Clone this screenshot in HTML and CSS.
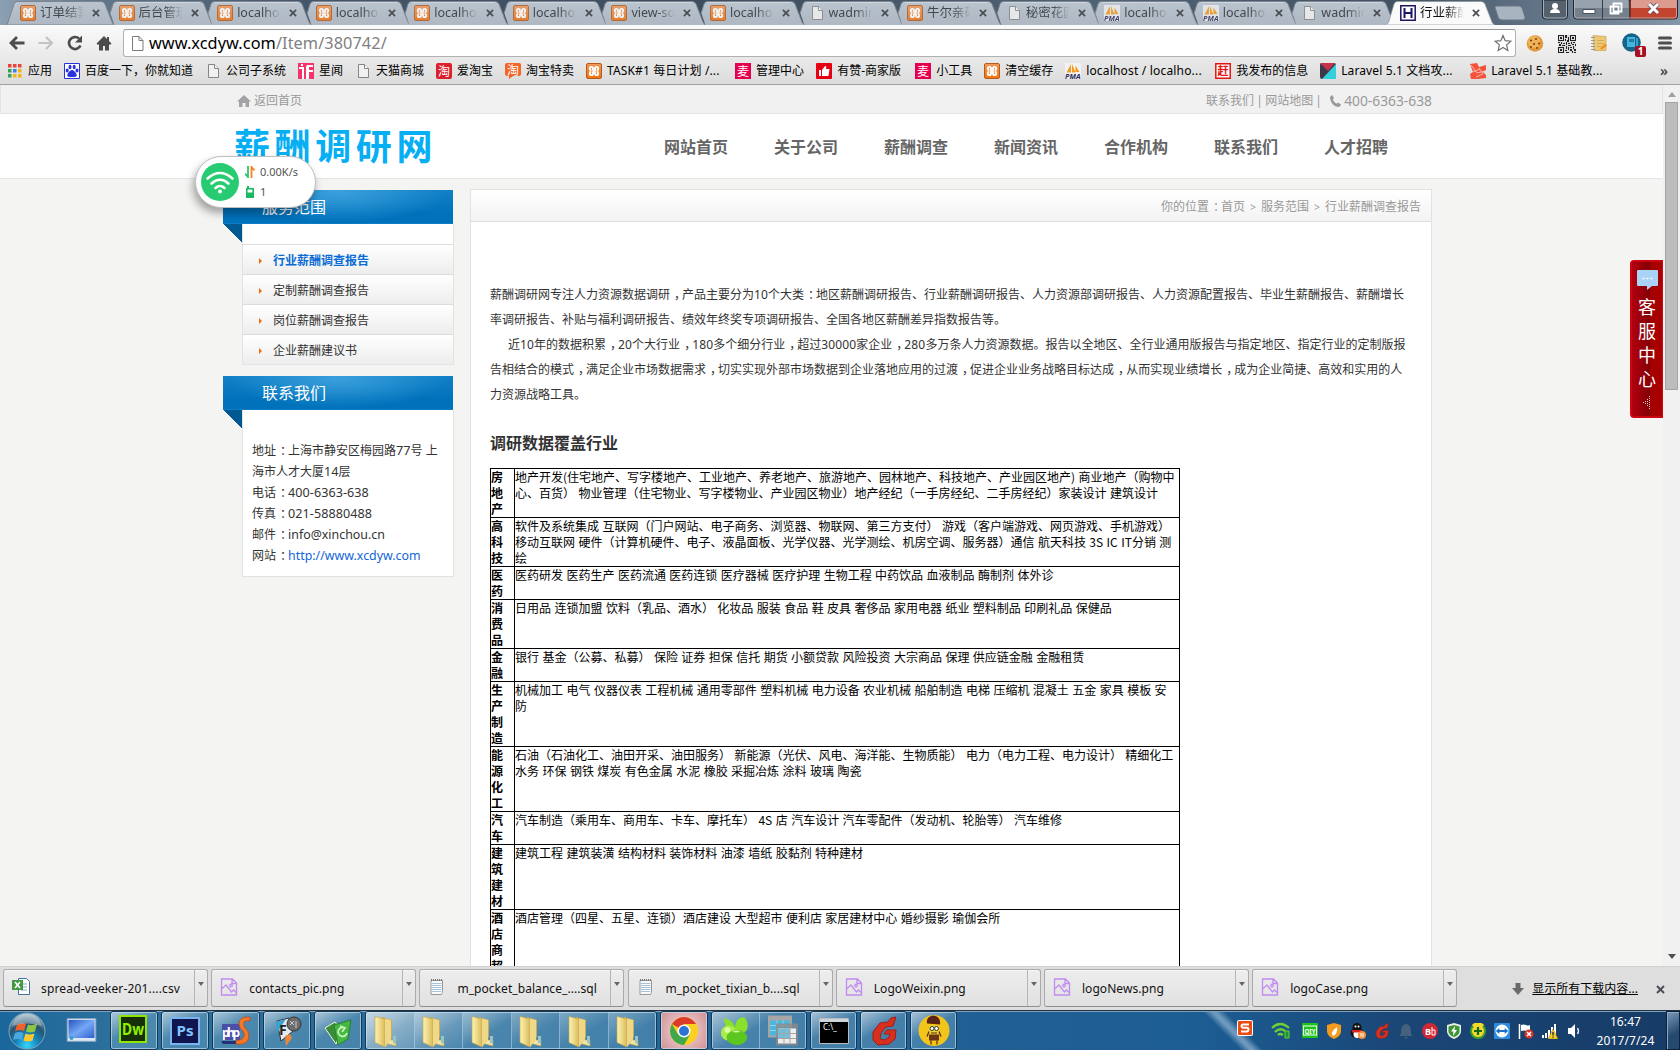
FILE: index.html
```html
<!DOCTYPE html>
<html lang="zh-CN">
<head>
<meta charset="utf-8">
<title>行业薪酬调查报告</title>
<link rel="stylesheet" href="styles.css">
</head>
<body>
<svg class="defs" width="0" height="0">
  <defs>
    <linearGradient id="gOrange" x1="0" y1="0" x2="0" y2="1"><stop offset="0" stop-color="#f09a5c"/><stop offset="1" stop-color="#f2710d"/></linearGradient>
    <linearGradient id="gFolder" x1="0" y1="0" x2="1" y2="0"><stop offset="0" stop-color="#fbf3b4"/><stop offset=".5" stop-color="#ecd985"/><stop offset="1" stop-color="#d9b95a"/></linearGradient>
    <radialGradient id="gOrb" cx=".5" cy=".9" r=".9"><stop offset="0" stop-color="#35d6fb"/><stop offset=".35" stop-color="#1384bb"/><stop offset=".65" stop-color="#27536f"/><stop offset="1" stop-color="#a9c3d0"/></radialGradient>
    <linearGradient id="gScreen" x1="0" y1="0" x2="1" y2="1"><stop offset="0" stop-color="#2456c4"/><stop offset=".5" stop-color="#74a7f3"/><stop offset="1" stop-color="#2f62cf"/></linearGradient>
    <linearGradient id="gTab" x1="0" y1="0" x2="0" y2="1"><stop offset="0" stop-color="#b9c4cf"/><stop offset="1" stop-color="#aeb7c2"/></linearGradient>
    <symbol id="tab" viewBox="0 0 108 25"><path d="M8.4 25 4.2 13 7 4Q8 1.500 10 1.500H94Q97 1.500 98 4L105 22Q106 24.500 107.500 25Z" fill="url(#gTab)"/><path d="M4.200 13 7 4Q8 1.500 10 1.500H94Q97 1.500 98 4L105 22Q106 24.500 108 24.500" fill="none" stroke="#7c858f"/><path d="M11 2.500H94" stroke="#cfd6de"/></symbol>
    <symbol id="tabfirst" viewBox="0 0 108 25"><path d="M0 25 7 4Q8 1.500 10 1.500H94Q97 1.500 98 4L105 22Q106 24.500 107.500 25Z" fill="url(#gTab)" stroke="#7c858f"/></symbol>
    <symbol id="tabon" viewBox="0 0 108 25"><path d="M-1 25Q1 24 2 21L7 4Q8 1.500 10 1.500H94Q97 1.500 98 4L105 22Q106 24.500 108 25Z" fill="#fafafa" stroke="#8a929b" stroke-width=".7"/></symbol>
    <symbol id="xampp" viewBox="0 0 16 16"><rect x=".5" y=".5" width="15" height="15" rx="1.500" fill="url(#gOrange)" stroke="#b35a1c"/><g fill="none" stroke="#fff" stroke-width="1.900"><path d="M7.200 8H8.800M7 7.800V5.500Q7 3.900 5.400 3.900T3.800 5.500 5.400 7.200M9 7.800V5.500Q9 3.900 10.600 3.900T12.200 5.500 10.600 7.200M7 8.200v2.300Q7 12.100 5.400 12.100T3.800 10.500 5.400 8.800M9 8.200v2.300q0 1.600 1.600 1.600t1.600-1.600-1.600-1.700"/></g></symbol>
    <symbol id="doc" viewBox="0 0 16 16"><path d="M3.500 1.500h6l4 4v9h-10z" fill="#f1f1f1" stroke="#858585"/><path d="M9.500 1.500v4h4" fill="#fff" stroke="#858585"/></symbol>
    <symbol id="pma" viewBox="0 0 16 16"><path d="M0 0h16v16H0z" fill="#f4f4f4" opacity=".85"/><path d="M1.500 9.500 6 1v8.500zM7 9.500V1l3.500 8.500zM10.500 9V2.500L14.500 9z" fill="#f39a1d"/><text x="0" y="16" font-size="7" font-weight="bold" font-style="italic" fill="#2c2c5c" textLength="15.500" lengthAdjust="spacingAndGlyphs">PMA</text></symbol>
    <symbol id="x" viewBox="0 0 9 9"><path d="m1 1 7 7M8 1 1 8" stroke="#4a4d51" stroke-width="1.900"/></symbol>
    <symbol id="png" viewBox="0 0 18 18"><g fill="none" stroke="#c08cf0" stroke-width="1.300"><path d="M1.500 1h11l4 4v12h-15zM12 1v4.500h4.500M1.500 11 6 7l5.500 7 2-2 3 3"/><circle cx="11" cy="7.500" r="1.300"/></g></symbol>
    <symbol id="note" viewBox="0 0 18 18"><path d="M3 2.500h11.500v12l-1 2H3z" fill="#fafafa" stroke="#999"/><path d="M4 5.500h9.500M4 7.500h9.500M4 9.500h9.500M4 11.500h9.500M4 13.500h9" stroke="#a5c3da"/><path d="M3 2h11" stroke="#777" stroke-width="2" stroke-dasharray="1 1"/></symbol>
    <symbol id="folder" viewBox="0 0 26 34"><path d="m9 3 10 3v17l-8 8z" fill="#cfb262"/><path d="m10 4 8 2v20h5v6l-8-2z" fill="#f2e5a3" stroke="#b99b4c" stroke-width=".6"/><path d="M20 22h3v8l-3-1z" fill="#9cc3c4"/><path d="M2 2.500 12 5v28L2 28.500z" fill="url(#gFolder)" stroke="#c5a850" stroke-width=".7"/><path d="m12 5 6 1v20l-6 7z" fill="#efd887"/></symbol>
    <symbol id="gee" viewBox="0 0 28 30"><path d="m26 1-5 1-3 4-8 1-7 9v8l5 5 11-1 6-5 1-9h-9l-3 4h6l-1 3-4 3-5-1 1-6 5-6 7-1z" fill="#d8301f" stroke="#a31d14"/></symbol>
  </defs>
</svg>

<header class="tabstrip">
  <div class="tabs">
    <div class="tab"><svg class="shape"><use href="#tabfirst"/></svg><svg class="fav"><use href="#xampp"/></svg><span>订单结算</span><svg class="x"><use href="#x"/></svg></div>
    <div class="tab"><svg class="shape"><use href="#tab"/></svg><svg class="fav"><use href="#xampp"/></svg><span>后台管理</span><svg class="x"><use href="#x"/></svg></div>
    <div class="tab"><svg class="shape"><use href="#tab"/></svg><svg class="fav"><use href="#xampp"/></svg><span>localhost</span><svg class="x"><use href="#x"/></svg></div>
    <div class="tab"><svg class="shape"><use href="#tab"/></svg><svg class="fav"><use href="#xampp"/></svg><span>localho</span><svg class="x"><use href="#x"/></svg></div>
    <div class="tab"><svg class="shape"><use href="#tab"/></svg><svg class="fav"><use href="#xampp"/></svg><span>localhost</span><svg class="x"><use href="#x"/></svg></div>
    <div class="tab"><svg class="shape"><use href="#tab"/></svg><svg class="fav"><use href="#xampp"/></svg><span>localhost</span><svg class="x"><use href="#x"/></svg></div>
    <div class="tab"><svg class="shape"><use href="#tab"/></svg><svg class="fav"><use href="#xampp"/></svg><span>view-so</span><svg class="x"><use href="#x"/></svg></div>
    <div class="tab"><svg class="shape"><use href="#tab"/></svg><svg class="fav"><use href="#xampp"/></svg><span>localhost</span><svg class="x"><use href="#x"/></svg></div>
    <div class="tab"><svg class="shape"><use href="#tab"/></svg><svg class="fav"><use href="#doc"/></svg><span>wadmin</span><svg class="x"><use href="#x"/></svg></div>
    <div class="tab"><svg class="shape"><use href="#tab"/></svg><svg class="fav"><use href="#xampp"/></svg><span>牛尔亲研</span><svg class="x"><use href="#x"/></svg></div>
    <div class="tab"><svg class="shape"><use href="#tab"/></svg><svg class="fav"><use href="#doc"/></svg><span>秘密花园</span><svg class="x"><use href="#x"/></svg></div>
    <div class="tab"><svg class="shape"><use href="#tab"/></svg><svg class="fav"><use href="#pma"/></svg><span>localho</span><svg class="x"><use href="#x"/></svg></div>
    <div class="tab"><svg class="shape"><use href="#tab"/></svg><svg class="fav"><use href="#pma"/></svg><span>localhost</span><svg class="x"><use href="#x"/></svg></div>
    <div class="tab"><svg class="shape"><use href="#tab"/></svg><svg class="fav"><use href="#doc"/></svg><span>wadmin</span><svg class="x"><use href="#x"/></svg></div>
    <div class="tab on"><svg class="shape"><use href="#tabon"/></svg><svg class="fav" viewBox="0 0 16 16"><path d="M.8.8h14.400v14.400H.8z" fill="#fff" stroke="#1b1464" stroke-width="1.500"/><path d="M4.500 3v10M11.500 3v10M4.500 8h7" stroke="#1b1464" stroke-width="2" fill="none"/></svg><span>行业薪酬</span><svg class="x"><use href="#x"/></svg></div>
  </div>
  <svg class="newtab" viewBox="0 0 32 16"><path d="M1 2.500Q1 1 3 1h22q2 0 3 2l3 9q.5 3-2 3H8q-3 0-4-3z" fill="#a9b4c1" stroke="#6b7682"/></svg>
  <div class="wincontrols">
    <svg class="user" viewBox="0 0 26 20"><path d="M.5 0v16q0 3 3 3h19q3 0 3-3V0z" fill="#56616e" stroke="#1e2937"/><path d="M1.500 0v15.500q0 2.500 2.500 2.500h18q2.500 0 2.500-2.500V0" fill="none" stroke="#a7b1bc"/><circle cx="13" cy="6" r="3" fill="#fff"/><path d="M8 13q0-4 5-4t5 4z" fill="#fff"/></svg>
    <svg class="mmc" viewBox="0 0 105 20"><path d="M.5 0v16q0 3 3 3H57V0z" fill="#74808c" stroke="#1e2937"/><path d="M57 0h47.500v16q0 3-3 3H57z" fill="#c4452f" stroke="#3c1c1c"/><path d="M58 0h45v8H58z" fill="#dc9b8c"/><path d="M1.500 0h54v8h-54z" fill="#97a2ad"/><path d="M1.500 0v15.500q0 2.500 2.500 2.500h97q2.500 0 2.500-2.500V0" fill="none" stroke="#c3b7b9" opacity=".8"/><path d="M29.500 0v19" stroke="#333e4b"/><path d="M10 9.500h12v4H10z" fill="#fff" stroke="#4a4f5a"/><path d="M40.500 3.500h8v8h-8zM37.500 6.500h8v7h-8z" fill="none" stroke="#fff" stroke-width="1.800"/><path d="m76 4 9 9M85 4l-9 9" stroke="#5f4a55" stroke-width="4.500"/><path d="m76 4 9 9M85 4l-9 9" stroke="#fff" stroke-width="3"/></svg>
  </div>
</header>

<div class="toolbar">
  <div class="navrow">
    <div class="navicons">
      <svg viewBox="0 0 16 16"><path d="M15.500 8H2M8 2 2 8l6 6" fill="none" stroke="#4c4c4c" stroke-width="2.800"/></svg>
      <svg viewBox="0 0 16 16"><path d="M.5 8h13.500M8 2l6 6-6 6" fill="none" stroke="#c3c3c3" stroke-width="2.200"/></svg>
      <svg viewBox="0 0 16 16"><path d="M13.500 10.500A6 6 0 1 1 12 3.500" fill="none" stroke="#4c4c4c" stroke-width="2.700"/><path d="M15 .5V7.500H8z" fill="#4c4c4c"/></svg>
      <svg viewBox="0 0 16 16"><path d="M8 1 .5 8.500 2 10l1-1v6.500h4V11h2v4.500h4V9l1 1 1.500-1.500L13 6V2h-2v2z" fill="#4c4c4c"/></svg>
    </div>
    <div class="omni"><svg class="page" viewBox="0 0 13 17"><path d="M1.500 1.500h6.500l4 4v10H1.500z" fill="#fff" stroke="#7b7b7b"/><path d="M8 1.500v4h4" fill="none" stroke="#7b7b7b"/></svg><span class="url">www.xcdyw.com<i>/Item/380742/</i></span><svg class="star" viewBox="0 0 18 18"><path d="m9 1.500 2.200 5.200 5.600.5-4.200 3.700 1.200 5.500L9 13.500l-4.800 2.900 1.200-5.500L1.200 7.200l5.600-.5z" fill="#fff" stroke="#707070" stroke-width="1.200"/></svg></div>
    <div class="ext">
      <svg viewBox="0 0 18 18"><circle cx="9" cy="9" r="8.300" fill="#e39a3c"/><circle cx="8" cy="7.500" r="6" fill="#f3bd65" opacity=".7"/><g fill="#7e4314"><circle cx="5" cy="6" r="1.100"/><circle cx="10" cy="4.500" r="1.100"/><circle cx="13" cy="9" r="1.100"/><circle cx="8" cy="9.500" r="1.100"/><circle cx="5" cy="12.500" r="1"/><circle cx="11" cy="13.500" r="1"/></g></svg>
      <svg viewBox="0 0 18 18" shape-rendering="crispEdges"><path d="M0 0h18v18H0z" fill="#ddd"/><path d="M0 0h6v6H0zM12 0h6v6h-6zM0 12h6v6H0z" fill="#222"/><path d="M1 1h4v4H1zM13 1h4v4h-4zM1 13h4v4H1z" fill="#ddd"/><path d="M2 2h2v2H2zM14 2h2v2h-2zM2 14h2v2H2zM7 0h2v3H7zM10 2h1v3h-1zM7 4h1v2H7zM9 5h2v2H9zM0 7h2v1H0zM3 7h1v2H3zM5 8h2v1H5zM1 9h2v2H1zM4 10h3v1H4zM8 7h1v3H8zM10 8h2v1h-2zM13 7h1v2h-1zM15 7h2v1h-2zM14 9h2v1h-2zM17 9h1v2h-1zM10 10h3v1h-3zM8 11h1v3H8zM10 12h1v3h-1zM12 12h2v1h-2zM15 11h1v3h-1zM7 15h2v1H7zM8 17h3v1H8zM12 14h2v2h-2zM14 16h1v2h-1zM16 14h2v2h-2zM16 17h2v1h-2z" fill="#222"/></svg>
      <svg viewBox="0 0 18 18"><path d="M3 1 16 2v14H4z" fill="#ecc872" stroke="#c9a04c" stroke-width=".7"/><path d="M7 6h7M7 9h7M7 12h4" stroke="#c9a04c" stroke-width=".7"/><path d="M1 3h4M1 6h4M1 9h4M1 12h4M1 15h4" stroke="#999"/><path d="m10 14 5-5 2 2-5 4z" fill="#f28f22"/></svg>
      <svg class="badge" viewBox="0 0 24 24"><circle cx="9.500" cy="9.500" r="9.300" fill="#15658a"/><path d="M5 4h8v10H5z" fill="#45b5dd"/><path d="M7 6h5v3H7z" fill="#1d7ea8"/><path d="M15 5v8" stroke="#45b5dd" stroke-width="1.500"/><rect x="13" y="13" width="11" height="11" rx="2" fill="#a70f23"/><text x="18.500" y="22" text-anchor="middle" font-size="10" font-weight="bold" fill="#fff" font-family="Liberation Sans">1</text></svg>
      <svg class="menu" viewBox="0 0 14 14"><path d="M1.500 2h11M1.500 7h11M1.500 12h11" stroke="#4f4f4f" stroke-width="3" stroke-linecap="round"/></svg>
    </div>
  </div>
  <div class="bookmarks">
    <a class="apps"><svg viewBox="0 0 14 14"><path fill="#eb4335" d="M0 0h3.500v3.500H0zM5 0h3.500v3.500H5zM10 0h3.500v3.500H10z"/><path fill="#32a350" d="M0 5h3.500v3.500H0zM0 10h3.500v3.500H0z"/><path fill="#3e83ed" d="M5 5h3.500v3.500H5z"/><path fill="#f5b314" d="M10 5h3.500v3.500H10zM5 10h3.500v3.500H5zM10 10h3.500v3.500H10z"/></svg>应用</a>
    <a><svg viewBox="0 0 16 16"><path d="M.5.5h15v15H.5z" fill="#fff" stroke="#2932dc"/><g fill="#2932dc"><ellipse cx="6" cy="4" rx="1.500" ry="2.200"/><ellipse cx="10.200" cy="4" rx="1.500" ry="2.200"/><ellipse cx="3.200" cy="7.500" rx="1.500" ry="1.900"/><ellipse cx="13" cy="7.500" rx="1.500" ry="1.900"/><path d="M8 7q2 0 4.500 4 .8 3-2 3H5.500q-2.800 0-2-3Q6 7 8 7z"/></g></svg>百度一下，你就知道</a>
    <a><svg><use href="#doc"/></svg>公司子系统</a>
    <a><svg viewBox="0 0 16 16"><path d="M0 0h16v16H0z" fill="#f8336a"/><path d="M1 4h5v12H4V6H1zM9 2h6v2h-4v3h4v2h-4v7H8V4zM3 1h2v2H3z" fill="#fff"/></svg>星闻</a>
    <a><svg><use href="#doc"/></svg>天猫商城</a>
    <a><svg viewBox="0 0 16 16"><rect width="16" height="16" rx="2" fill="#dc1f2b"/><text x="2" y="12.500" font-size="12" fill="#fff">淘</text></svg>爱淘宝</a>
    <a><svg viewBox="0 0 16 16"><path d="M2 0h12q2 0 2 2v9q0 2-2 2H8l-4 3v-3H2q-2 0-2-2V2q0-2 2-2z" fill="#f56327"/><text x="2" y="11.500" font-size="12" fill="#fff">淘</text></svg>淘宝特卖</a>
    <a><svg><use href="#xampp"/></svg><span class="w116">TASK#1 每日计划 /...</span></a>
    <a><svg viewBox="0 0 16 16"><path d="M0 0h16v16H0z" fill="#e5004f"/><text x="2" y="12.500" font-size="12" fill="#fff">麦</text></svg>管理中心</a>
    <a><svg viewBox="0 0 16 16"><rect width="16" height="16" rx="1" fill="#e60012"/><path d="M3 7h2v6H3zM6 7l3-4q2 0 1 3h3.500l-1 7H6z" fill="#fff"/></svg><span class="w66">有赞-商家版</span></a>
    <a><svg viewBox="0 0 16 16"><path d="M0 0h16v16H0z" fill="#e5004f"/><text x="2" y="12.500" font-size="12" fill="#fff">麦</text></svg>小工具</a>
    <a><svg><use href="#xampp"/></svg>清空缓存</a>
    <a><svg><use href="#pma"/></svg><span class="w117 wide">localhost / localho...</span></a>
    <a><svg viewBox="0 0 16 16"><path d="M.8.8h14.400v14.400H.8z" fill="#fff" stroke="#e61212" stroke-width="1.500"/><text x="2.500" y="12" font-size="11" font-weight="bold" fill="#e61212">赶</text></svg>我发布的信息</a>
    <a><svg viewBox="0 0 16 16"><rect width="16" height="16" rx="2" fill="#3d3847"/><path d="M0 0h15L8 8z" fill="#c4334b"/><path d="M16 1v15H2z" fill="#34d0dc"/></svg><span class="w117">Laravel 5.1 文档攻...</span></a>
    <a><svg viewBox="0 0 16 16"><path d="m0 1 7-1 2 4 7-2v5l-3 2 3 3v3l-8 1H1l-1-5 3-2z" fill="#f4523b"/><path d="m1 2 6 8 8-2M9 5l4 6-7 3M3 9l7-3" stroke="#fcc" stroke-width=".8" fill="none"/></svg><span class="w117">Laravel 5.1 基础教...</span></a>
    <b class="more">»</b>
  </div>
</div>

<div class="viewport">
  <div class="page-area">
    <div class="topbar"><div class="wrap">
      <a class="home"><svg viewBox="0 0 14 12"><path d="M7 0 0 6.500h2V12h3.500V8h3v4H12V6.500h2z" fill="#a3a3a3"/></svg>返回首页</a>
      <div class="toplinks">联系我们 | 网站地图 | <svg viewBox="0 0 11 12"><path d="m2 0 2 3-1.200 1.500Q4 7.500 6.500 8.700L8 7.500l3 2Q10.500 12 8 12 1 10.500 0 3 0 .8 2 0z" fill="#999"/></svg><span>400-6363-638</span></div>
    </div></div>
    <div class="masthead"><div class="wrap">
      <h1>薪酬调研网</h1>
      <nav><a>网站首页</a><a>关于公司</a><a>薪酬调查</a><a>新闻资讯</a><a>合作机构</a><a>联系我们</a><a>人才招聘</a></nav>
    </div></div>
    <div class="columns">
      <aside>
        <section class="box"><h2>服务范围</h2><div class="panel">
          <ul><li class="cur">行业薪酬调查报告</li><li>定制薪酬调查报告</li><li>岗位薪酬调查报告</li><li>企业薪酬建议书</li></ul>
        </div></section>
        <section class="box"><h2>联系我们</h2><div class="panel contact">
          地址<i class="p">：</i>上海市静安区梅园路<em>77</em>号 上<br>海市人才大厦<em>14</em>层<br>电话<i class="p">：</i><em>400-6363-638</em><br>传真<i class="p">：</i><em>021-58880488</em><br>邮件<i class="p">：</i><em class="tight">info@xinchou.cn</em><br>网站<i class="p">：</i><em class="link tight">http://www.xcdyw.com</em>
        </div></section>
      </aside>
      <main>
        <div class="crumbs">你的位置<i class="p">：</i>首页<i class="gt">&gt;</i>服务范围<i class="gt">&gt;</i>行业薪酬调查报告</div>
        <article>
          <p>薪酬调研网专注人力资源数据调研<i class="p">，</i>产品主要分为<em>10</em>个大类<i class="p">：</i>地区薪酬调研报告、行业薪酬调研报告、人力资源部调研报告、人力资源配置报告、毕业生薪酬报告、薪酬增长<br>率调研报告、补贴与福利调研报告、绩效年终奖专项调研报告、全国各地区薪酬差异指数报告等。</p>
          <p class="ind">近<em>10</em>年的数据积累<i class="p">，</i><em>20</em>个大行业<i class="p">，</i><em>180</em>多个细分行业<i class="p">，</i>超过<em>30000</em>家企业<i class="p">，</i><em>280</em>多万条人力资源数据。报告以全地区、全行业通用版报告与指定地区、指定行业的定制版报<br>告相结合的模式<i class="p">，</i>满足企业市场数据需求<i class="p">，</i>切实实现外部市场数据到企业落地应用的过渡<i class="p">，</i>促进企业业务战略目标达成<i class="p">，</i>从而实现业绩增长<i class="p">，</i>成为企业简捷、高效和实用的人<br>力资源战略工具。</p>
          <h3>调研数据覆盖行业</h3>
          <table>
            <tr><th>房<br>地<br>产</th><td>地产开发(住宅地产、写字楼地产、工业地产、养老地产、旅游地产、园林地产、科技地产、产业园区地产) 商业地产（购物中<br>心、百货） 物业管理（住宅物业、写字楼物业、产业园区物业）地产经纪（一手房经纪、二手房经纪）家装设计 建筑设计</td></tr>
            <tr><th>高<br>科<br>技</th><td>软件及系统集成 互联网（门户网站、电子商务、浏览器、物联网、第三方支付） 游戏（客户端游戏、网页游戏、手机游戏）<br>移动互联网 硬件（计算机硬件、电子、液晶面板、光学仪器、光学测绘、机房空调、服务器）通信 航天科技 3S IC IT分销 测<br>绘</td></tr>
            <tr><th>医<br>药</th><td>医药研发 医药生产 医药流通 医药连锁 医疗器械 医疗护理 生物工程 中药饮品 血液制品 酶制剂 体外诊</td></tr>
            <tr><th>消<br>费<br>品</th><td>日用品 连锁加盟 饮料（乳品、酒水） 化妆品 服装 食品 鞋 皮具 奢侈品 家用电器 纸业 塑料制品 印刷礼品 保健品</td></tr>
            <tr><th>金<br>融</th><td>银行 基金（公募、私募） 保险 证券 担保 信托 期货 小额贷款 风险投资 大宗商品 保理 供应链金融 金融租赁</td></tr>
            <tr><th>生<br>产<br>制<br>造</th><td>机械加工 电气 仪器仪表 工程机械 通用零部件 塑料机械 电力设备 农业机械 船舶制造 电梯 压缩机 混凝土 五金 家具 模板 安<br>防</td></tr>
            <tr><th>能<br>源<br>化<br>工</th><td>石油（石油化工、油田开采、油田服务） 新能源（光伏、风电、海洋能、生物质能） 电力（电力工程、电力设计） 精细化工<br>水务 环保 钢铁 煤炭 有色金属 水泥 橡胶 采掘冶炼 涂料 玻璃 陶瓷</td></tr>
            <tr><th>汽<br>车</th><td>汽车制造（乘用车、商用车、卡车、摩托车） 4S 店 汽车设计 汽车零配件（发动机、轮胎等） 汽车维修</td></tr>
            <tr><th>建<br>筑<br>建<br>材</th><td>建筑工程 建筑装潢 结构材料 装饰材料 油漆 墙纸 胶黏剂 特种建材</td></tr>
            <tr><th>酒<br>店<br>商<br>超</th><td>酒店管理（四星、五星、连锁）酒店建设 大型超市 便利店 家居建材中心 婚纱摄影 瑜伽会所</td></tr>
          </table>
        </article>
      </main>
    </div>
  </div>
  <div class="scrollbar"><svg viewBox="0 0 8 5"><path d="M4 0 8 5H0z" fill="#a0a0a0"/></svg><div class="thumb"></div><svg viewBox="0 0 8 5"><path d="M0 0h8L4 5z" fill="#505050"/></svg></div>
  <div class="service"><svg viewBox="0 0 21 20"><path d="M0 1q0-1 1-1h19q1 0 1 1v14q0 1-1 1h-5l-5 4v-4H1q-1 0-1-1z" fill="#a9d3f7"/><path d="M5.500 8.500h2M9.500 8.500h2M13.500 8.500h2" stroke="#fff" stroke-width="1.500"/></svg><span>客<br>服<br>中<br>心</span><svg class="arr" viewBox="0 0 8 14"><g fill="#f3c9c9"><path d="M6 0h1v1H6zM6 2h1v1H6zM6 4h1v1H6zM6 6h1v1H6zM6 8h1v1H6zM6 10h1v1H6zM6 12h1v1H6zM4 3h1v1H4zM4 5h1v1H4zM4 7h1v1H4zM4 9h1v1H4zM2 5h1v1H2zM2 7h1v1H2zM0 6h1v1H0z"/></g></svg></div>
  <div class="pill">
    <svg viewBox="0 0 38 38"><circle cx="19" cy="19" r="19" fill="#27cc72"/><g fill="none" stroke="#fff" stroke-width="2.600" stroke-linecap="round"><path d="M6.500 15.500q12.500-11 25 0M10.500 20.500q8.500-7.500 17 0M14.500 25q4.500-4 9 0"/></g><circle cx="19" cy="28.500" r="2" fill="#fff"/></svg>
    <div><span><svg viewBox="0 0 10 12"><path d="M3 0v11L0 7.500" fill="none" stroke="#2cc573" stroke-width="1.800"/><path d="M6.500 12V1L9.500 4.500" fill="none" stroke="#f4801f" stroke-width="1.800"/></svg>0.00K/s</span><span><svg viewBox="0 0 10 12"><path d="M1.800 2.800h6.400v8.400H1.800z" fill="#fff" stroke="#1cb963" stroke-width="1.600"/><path d="M1 6.500h8V12H1zM2 0h2v3H2z" fill="#1cb963"/></svg>1</span></div>
  </div>
</div>

<div class="downloads">
  <div class="dl"><svg viewBox="0 0 18 18"><path d="M6.500.5h8l3 3v13h-11z" fill="#fff" stroke="#42719c"/><path d="M9 6h6M9 9h6M9 12h6" stroke="#86a8c5"/><path d="M0 2h11v10H0z" fill="#3f9a43"/><path d="m3 4 5 6M8 4l-5 6" stroke="#fff" stroke-width="1.600"/></svg><span class="spaced">spread-veeker-201....csv</span><b></b></div>
  <div class="dl"><svg><use href="#png"/></svg><span>contacts_pic.png</span><b></b></div>
  <div class="dl"><svg><use href="#note"/></svg><span>m_pocket_balance_....sql</span><b></b></div>
  <div class="dl"><svg><use href="#note"/></svg><span>m_pocket_tixian_b....sql</span><b></b></div>
  <div class="dl"><svg><use href="#png"/></svg><span>LogoWeixin.png</span><b></b></div>
  <div class="dl"><svg><use href="#png"/></svg><span>logoNews.png</span><b></b></div>
  <div class="dl"><svg><use href="#png"/></svg><span>logoCase.png</span><b></b></div>
  <div class="showall"><svg viewBox="0 0 12 12"><path d="M3.500 0h5v5H12l-6 7-6-7h3.500z" fill="#6a6a6a"/></svg><u>显示所有下载内容...</u><svg class="close"><use href="#x"/></svg></div>
</div>

<footer class="taskbar">
  <svg class="orb" viewBox="0 0 38 38"><circle cx="19" cy="19" r="18" fill="url(#gOrb)" stroke="#7fa7bd"/><path d="M9 13q4-3 9-1l-2 7q-4-2-9 0z" fill="#f0602b"/><path d="M20 12.500q4 2 9-1l-2 8q-5 2-9 0z" fill="#8dc642"/><path d="M7 21q4-2 8.500 0l-2 7q-4-2-8.500 0z" fill="#4ba7e2"/><path d="M17.500 21.500q4 2 9 0l-2 7q-5 2-9 0z" fill="#fbc92f"/><path d="M4 14Q8 2 19 2t15 12q-14-5-30 0z" fill="#fff" opacity=".3"/></svg>
  <svg class="desk" viewBox="0 0 30 24"><path d="M.7.700h28.600v22.600H.7z" fill="#dce9f5" stroke="#8aa4bf"/><path d="M2 2h26v18H2z" fill="url(#gScreen)"/><circle cx="5" cy="20" r="2" fill="#3a9ec9"/></svg>
  <div class="group"><div><svg class="up" viewBox="0 0 28 28"><path d="M1 1h26v26H1z" fill="#17300a" stroke="#8ce600" stroke-width="2"/><text x="14" y="20" text-anchor="middle" font-size="16" font-weight="bold" fill="#8ff000" textLength="22" lengthAdjust="spacingAndGlyphs">Dw</text></svg></div></div>
  <div class="group"><div><svg viewBox="0 0 30 28"><path d="M1 1h28v26H1z" fill="#10164d" stroke="#7ab4f0" stroke-width="2"/><text x="15" y="19" text-anchor="middle" font-size="15" font-weight="bold" fill="#7fc6ff" textLength="17" lengthAdjust="spacingAndGlyphs">Ps</text></svg></div></div>
  <div class="group"><div><svg viewBox="0 0 30 30"><path d="M1 8h18v16H1z" fill="#4a50a8"/><path d="M0 25h20l-2 3H2z" fill="#243077"/><text x="1" y="21" font-size="12" font-weight="bold" fill="#fff" textLength="18">php</text><path d="M29 1Q18 0 18 8q0 4 4 7 3 5-1 8-3 2-6 1v4q12 2 13-8 0-5-4-8-3-4 0-7l5 0z" fill="#f4782a" stroke="#b94314" stroke-width=".7"/></svg></div></div>
  <div class="group"><div><svg viewBox="0 0 30 30"><path d="m5 5 12-3 4 13-12 10z" fill="#e6eaec" stroke="#333"/><path d="m4 6 10-3-9 14z" fill="#38a2d1"/><text x="7" y="19" font-size="14" font-weight="bold" fill="#222">F</text><circle cx="22" cy="8" r="7" fill="#6d6d6d" stroke="#333"/><path d="m18 5 4 4M18 9l4-4M24 5v7" stroke="#ccc"/><path d="m13 20 5-2 2 4-6 8z" fill="#ee8440"/></svg></div></div>
  <div class="group"><div><svg viewBox="0 0 30 30"><path d="m2 12 10-6 6 8-5 14z" fill="#3a8c38" stroke="#e8f6e0"/><path d="m11 9 17-5-3 19-10 6z" fill="#45b842" stroke="#2b7f32"/><path d="M22 12a4.500 4.500 0 1 0 2 5M17 10l5 2-3 4" fill="none" stroke="#c5f5b8" stroke-width="1.800"/></svg></div></div>
  <div class="group many"><div><svg><use href="#folder"/></svg></div><div><svg><use href="#folder"/></svg></div><div><svg><use href="#folder"/></svg></div><div><svg><use href="#folder"/></svg></div><div><svg><use href="#folder"/></svg></div><div><svg><use href="#folder"/></svg></div></div>
  <div class="group hot"><div><svg viewBox="0 0 30 30"><circle cx="15" cy="15" r="14" fill="#fcd01f"/><path d="M15 15 2.900 8A14 14 0 0 1 27.100 8H15z" fill="#dc3b2b"/><path d="M2.900 8A14 14 0 0 0 15 29l6-10.500L9 18.500z" fill="#3fa84a"/><circle cx="15" cy="15" r="6.500" fill="#fff"/><circle cx="15" cy="15" r="5" fill="#2d73d6"/></svg></div></div>
  <div class="group duo"><div><svg viewBox="0 0 32 30"><path d="M4 1q10 2 12 10Q17 0 26 0q6 8 2 15-5 4-12 1Q6 16 4 1z" fill="#8be02c"/><circle cx="9" cy="17" r="8" fill="#a9ee4b"/><ellipse cx="18" cy="22" rx="11" ry="8" fill="#5cc81f"/><circle cx="8" cy="14" r="3" fill="#dff9a6"/><path d="M13 16q4-3 9 0-5 1-9 0z" fill="#d2f7a0"/></svg></div><div><svg class="big" viewBox="0 0 32 32"><path d="M1 1h24v22H1z" fill="#a6a6a6"/><path d="M3 6h20v15H3z" fill="#4cb6dc"/><path d="M3 11h20M3 16h20M10 6v15M16 6v15" stroke="#8fd3ec"/><path d="M9 9h22v22H9z" fill="#8a8a8a" opacity=".8"/><path d="M11 14h18v15H11z" fill="#eee"/><path d="M11 14h12v10H11z" fill="#71bfdc"/><path d="M11 19h18M11 24h18M17 14v15M23 14v15" stroke="#a5a5a5"/></svg></div></div>
  <div class="group cmd"><div><svg viewBox="0 0 30 26"><path d="M.5.500h29v25H.5z" fill="#000" stroke="#bbb"/><path d="M1 1h28v3H1z" fill="#cfd4da"/><text x="4" y="12" font-size="8" fill="#fff" font-family="Liberation Mono">C:\_</text></svg></div></div>
  <div class="group cmd"><div><svg><use href="#gee"/></svg></div></div>
  <div class="group cmd"><div><svg class="big" viewBox="0 0 32 32"><circle cx="16" cy="16" r="15.500" fill="#f3c51b"/><path d="M11 11h10v12H11z" fill="#e9d235"/><path d="M11 20h10v6H11z" fill="#6b3415"/><path d="M9 9q-1-7 6-8 8 1 7 9z" fill="#5b2414"/><circle cx="14" cy="14" r="2" fill="#fff" stroke="#333"/><circle cx="18.500" cy="14" r="2" fill="#fff" stroke="#333"/><path d="M13 18.500h6M13 26v4M19 26v4M11 17l-2 5M21 17l2 5" stroke="#5b2414" stroke-width="1.200"/></svg></div></div>
  <div class="tray">
    <svg class="sogou" viewBox="0 0 16 16"><rect width="16" height="16" rx="2" fill="#fff"/><rect x="1" y="1" width="14" height="14" rx="1" fill="#e84a10"/><path d="M12 4.500H6Q4.500 4.500 4.500 6T6 7.800h4q1.500 0 1.500 1.600T10 11.500H4" fill="none" stroke="#fff" stroke-width="2"/></svg>
    <svg class="wf" viewBox="0 0 20 17"><path d="M1 6q8-8 17 0M4 10q5-5 10-1M7 13q2-2 5 0" fill="none" stroke="#6ed12f" stroke-width="2.300"/><path d="M14 9h4v7h-4z" fill="#193" stroke="#6ed12f"/></svg>
    <svg viewBox="0 0 16 16"><rect width="16" height="15" rx="1" fill="#1bc31b"/><rect x="1.500" y="3" width="13" height="9" fill="none" stroke="#fff"/><text x="2.500" y="10.500" font-size="7.500" font-weight="bold" fill="#fff" textLength="11" lengthAdjust="spacingAndGlyphs">QIY</text></svg>
    <svg viewBox="0 0 16 16"><path d="M8 0 15 2v7q-1 5-7 7-6-2-7-7V2z" fill="#f39b1d"/><path d="M11 4q1 7-4 9-4-3 4-9z" fill="#fff"/></svg>
    <svg viewBox="0 0 16 16"><ellipse cx="7" cy="4.500" rx="4.500" ry="4.500" fill="#111"/><ellipse cx="7" cy="10" rx="6.500" ry="5" fill="#111"/><ellipse cx="7" cy="11" rx="3.500" ry="4" fill="#fff"/><path d="M2 7h10v2.500H2z" fill="#d8221f"/><circle cx="5.500" cy="3.500" r="1" fill="#fff"/><circle cx="8.500" cy="3.500" r="1" fill="#fff"/><circle cx="12" cy="12" r="4" fill="#f58e3b"/><path d="M10 11h4M10 13h4" stroke="#fff"/></svg>
    <svg viewBox="0 0 28 30"><use href="#gee" width="28" height="30"/></svg>
    <svg viewBox="0 0 16 16"><path d="M8 1q5 1 5 7v3l2 2H1l2-2V8q0-6 5-7zM6 14h4l-2 2z" fill="#46617d"/></svg>
    <svg viewBox="0 0 16 16"><circle cx="8" cy="8" r="8" fill="#cf2835"/><text x="3" y="11.500" font-size="9" font-weight="bold" fill="#fff">B</text><path d="M10 4v8h3V7h-3" fill="none" stroke="#fff"/></svg>
    <svg viewBox="0 0 16 16"><path d="M8 0 15 2v7q-1 5-7 7-6-2-7-7V2z" fill="#e9efe6"/><path d="M8 2 13.500 3.500V9q-1 3.500-5.500 5Q3.500 12.500 2.500 9V3.500z" fill="#3c9434"/><path d="m9 3-4 5.500h2.500L7 13l4-6H8.500z" fill="#fff"/></svg>
    <svg viewBox="0 0 16 16"><circle cx="8" cy="8" r="8" fill="#3aa52c"/><path d="M2 2a8 8 0 0 1 12 0L8 8z" fill="#f4d92c"/><circle cx="8" cy="8" r="6" fill="#f4d92c"/><path d="M8 4v8M4 8h8" stroke="#14691c" stroke-width="2.200"/></svg>
    <svg viewBox="0 0 16 16"><rect width="16" height="16" rx="1" fill="#2e8ce0"/><circle cx="8" cy="8" r="6.500" fill="#fff"/><path d="m1.800 8 3.500-3v2h5.400V5l3.500 3-3.500 3V9H5.300v2z" fill="#1a6fc9"/></svg>
    <svg viewBox="0 0 16 16"><path d="M1.500 1v15" stroke="#fff" stroke-width="1.500"/><path d="M3 2q3-1 5 0t4 0v6q-3 1-4 0T3 8z" fill="#fff"/><circle cx="11" cy="11" r="4.500" fill="#d7352b"/><path d="m9 9 4 4M13 9l-4 4" stroke="#fff" stroke-width="1.500"/></svg>
    <svg viewBox="0 0 16 16"><path d="M1 12v3M4 10v5M7 7v8M10 4v11M13 1v14" stroke="#fff" stroke-width="2"/><path d="m11 6 5 10H6z" fill="#f7ce2c" stroke="#a57b0b" stroke-width=".5"/><path d="M11 9v3.500M11 13.500v1.200" stroke="#222" stroke-width="1.300"/></svg>
    <svg viewBox="0 0 16 16"><path d="M2 5h3l4-4v14l-4-4H2z" fill="#fff"/><path d="M11.500 5q2 3 0 6" fill="none" stroke="#fff" stroke-width="1.300"/></svg>
  </div>
  <div class="clock">16:47<br>2017/7/24</div>
  <div class="peek"></div>
</footer>
</body>
</html>
```
FILE: styles.css
```css
* { box-sizing: border-box; }
body {
  margin: 0;
  width: 1680px;
  height: 1050px;
  overflow: hidden;
  display: flex;
  flex-direction: column;
  font: 12px/16px "Noto Sans", "Noto Sans CJK SC", sans-serif;
  text-spacing-trim: space-all;
  color: #000;
}
.defs { position: absolute; }
svg { display: block; flex: none; }
svg text { font-family: "Noto Sans", "Noto Sans CJK SC", sans-serif; }
i, em { font-style: normal; }
h1, h2, h3, p, ul { margin: 0; padding: 0; }

/* tab strip */
.tabstrip {
  height: 25px;
  flex: none;
  display: flex;
  background: linear-gradient(90deg, #8ba0b2 0, #63788c 90px, #44566a 300px, #3d4d5e 700px, #506375 1100px, #405264 1400px, #8497a9 1680px);
}
.tabs { display: flex; padding-left: 7px; width: 1495px; }
.tab {
  position: relative;
  width: 98.57px;
  flex: none;
  display: flex;
  align-items: center;
  padding-left: 13px;
  height: 25px;
  color: #44484d;
}
.shape { position: absolute; left: 0; top: 0; width: 108px; height: 25px; }
.fav { width: 16px; height: 16px; z-index: 1; opacity: .82; }
.tab span {
  z-index: 1;
  width: 44px;
  margin: 0 8px 0 4px;
  overflow: hidden;
  white-space: nowrap;
  font-size: 12.500px;
  -webkit-mask-image: linear-gradient(90deg, #000 60%, transparent);
  mask-image: linear-gradient(90deg, #000 60%, transparent);
}
.tab .x { width: 8px; height: 8px; z-index: 1; }
.tab.on { color: #111; }
.on .fav { opacity: 1; }
.newtab { width: 32px; height: 16px; margin: 5px 0 0 -1px; }
.wincontrols { margin-left: auto; display: flex; gap: 5px; padding-right: 2px; }
.user { width: 26px; height: 20px; }
.mmc { width: 105px; height: 20px; }

/* toolbar */
.toolbar {
  height: 60px;
  flex: none;
  background: linear-gradient(#fafafa, #dcdcdc);
  border-bottom: 1px solid #a2a2a2;
}
.navrow { height: 34px; display: flex; padding: 4px 8px 0 9px; }
.navicons { display: flex; gap: 13px; width: 114px; align-items: center; height: 28px; }
.navicons svg { width: 16px; height: 16px; }
.omni {
  width: 1394px;
  height: 28px;
  display: flex;
  align-items: center;
  background: #fff;
  border: 1px solid #b1b1b1;
  border-top-color: #999;
  border-radius: 3px;
  padding: 0 3px 0 7px;
}
.page { width: 13px; height: 17px; }
.url { margin-left: 5px; font-size: 16.300px; line-height: 24px; flex: 1; letter-spacing: .08px; }
.url i { color: #808080; }
.star { width: 18px; height: 18px; }
.ext { display: flex; align-items: center; margin-left: 10px; height: 28px; }
.ext svg { width: 18px; height: 19px; margin-right: 14px; }
.ext .badge { width: 24px; height: 24px; margin: 4px 12px 0 0; }
.ext .menu { width: 14px; height: 14px; margin: 0; }
.bookmarks { display: flex; align-items: center; gap: 12px; height: 24px; padding-left: 8px; white-space: nowrap; }
.bookmarks a { display: flex; align-items: center; gap: 5px; flex: none; }
.bookmarks svg { width: 16px; height: 16px; }
.bookmarks .apps { gap: 6px; }
.bookmarks .apps svg { width: 14px; height: 14px; }
.w116 { width: 116px; letter-spacing: .12px; }
.w66 { width: 66px; }
.w117 { width: 117px; letter-spacing: .12px; }
.wide { letter-spacing: .18px; }
.more { margin-left: auto; padding-right: 12px; font-weight: 600; font-size: 14px; color: #444; }

/* page */
.viewport { position: relative; flex: 1; min-height: 0; display: flex; overflow: hidden; }
.page-area { width: 1663px; height: 881px; overflow: hidden; background: #f4f4f3; }
.wrap { width: 1209px; margin-left: 223px; display: flex; }
.topbar { height: 29px; border: 1px solid #e3e3e3; border-top-color: #eee; background: #f1f1f1; color: #999; }
.topbar .wrap { margin-left: 222px; justify-content: space-between; align-items: center; height: 29px; padding-left: 14px; }
.home { display: flex; align-items: center; gap: 3px; }
.home svg { width: 14px; height: 12px; }
.toplinks { display: flex; align-items: center; white-space: pre; word-spacing: -.9px; }
.toplinks svg { width: 11px; height: 12px; margin: 0 3px 0 6px; }
.toplinks span { font-size: 13.800px; }
.masthead { height: 65px; background: #fff; border-bottom: 1px solid #e6e6e6; }
.masthead .wrap { height: 64px; align-items: center; }
h1 {
  margin-left: 11px;
  width: 430px;
  padding-bottom: 4px;
  font: bold 36px/60px "Noto Sans CJK SC", sans-serif;
  letter-spacing: 4.600px;
  color: #06aef3;
  white-space: nowrap;
}
nav { display: flex; gap: 46px; }
nav a { font: bold 16px/24px "Noto Sans CJK SC", sans-serif; color: #666; }
.columns { display: flex; padding: 10px 0 0 223px; gap: 16px; }
aside { width: 231px; }
.box {
  margin-bottom: 10px;
  padding-top: 1px;
  background: linear-gradient(45deg, transparent 50%, #005a91 50.500%) 0 35px / 20px 20px no-repeat;
}
h2 {
  height: 34px;
  padding-left: 39px;
  font: 16px/32px "Noto Sans CJK SC", sans-serif;
  color: #fff;
  background: radial-gradient(ellipse 110px 30px at 115px 2px, #3aa0dc, rgba(58,160,220,0)), linear-gradient(#1280c6, #0072bc 70%);
  border-bottom: 1px solid #0f7bc3;
  width: 230px;
}
.box .panel {
  margin-left: 19px;
  border: 1px solid #e2e2e2;
  border-top: 0;
  background: #fff;
  padding-top: 20px;
}
.box li {
  list-style: none;
  height: 30px;
  line-height: 31px;
  border-top: 1px solid #dcdcdc;
  background: linear-gradient(#fff, #ededed);
  padding-left: 16px;
  color: #333;
  display: flex;
}
.box li::before {
  content: "";
  width: 3px;
  height: 6px;
  margin: 13px 11px 0 0;
  background: #f26c0d;
  clip-path: polygon(0 0, 100% 50%, 0 100%);
}
.box li.cur { color: #0a6cd6; font-weight: bold; }
.box .panel.contact { height: 167px; padding: 30px 0 0 9px; line-height: 21px; color: #333; white-space: nowrap; }
em { letter-spacing: .15px; }
.p { padding-left: 4px; margin-right: -4px; }
.contact em { font-size: 12.600px; letter-spacing: .05px; line-height: 1; }
.contact .tight { font-size: 12.400px; letter-spacing: 0; }
.contact .link { color: #1166d6; }
main { width: 962px; height: 900px; background: #fff; border: 1px solid #e2e2e2; }
.crumbs {
  height: 32px;
  line-height: 34px;
  text-align: right;
  padding-right: 10px;
  color: #999;
  background: linear-gradient(#fff, #f3f3f3);
  border-bottom: 1px solid #dedede;
}
.gt { margin: 0 5px; font-size: 10.500px; }
article { padding: 60px 19px 0; color: #333; }
article p { line-height: 25px; white-space: nowrap; }
article .ind { text-indent: 18px; }
h3 { font: bold 16px/24px "Noto Sans CJK SC", sans-serif; margin: 23px 0 14px; }
table {
  width: 690px;
  border-collapse: collapse;
  color: #000;
  font-family: "Noto Sans CJK SC", sans-serif;
  word-spacing: .75px;
}
th, td { border: 1px solid #000; padding: 0; vertical-align: top; line-height: 16px; white-space: nowrap; }
th { width: 24px; text-align: left; }
tr { height: 33px; }

.scrollbar {
  width: 17px;
  background: #f1f1f1;
  display: flex;
  flex-direction: column;
  align-items: center;
  padding: 7px 0 7px;
}
.scrollbar svg { width: 8px; height: 5px; }
.scrollbar .thumb { width: 13px; height: 288px; margin: 5px 0 auto; background: #bcbcbc; border: 1px solid #a5a5a5; }
.service {
  position: absolute;
  left: 1630px;
  top: 175px;
  width: 33px;
  height: 158px;
  border: 2px solid #cd0612;
  border-right-width: 1px;
  border-radius: 4px 0 0 4px;
  background: linear-gradient(90deg, #b1000e, #830006 60%, #a50000 62%, #a80000);
  display: flex;
  flex-direction: column;
  align-items: center;
  padding-top: 8px;
  color: #fff;
}
.service svg { width: 21px; height: 20px; }
.service span { font-size: 18px; line-height: 24px; margin-top: 5px; }
.service .arr { width: 8px; height: 14px; margin-top: 5px; }
.pill {
  position: absolute;
  left: 195px;
  top: 71px;
  width: 121px;
  height: 52px;
  border: 1px solid #bfbfbf;
  border-radius: 26px;
  background: #fff;
  box-shadow: -2px 5px 9px rgba(0,0,0,.35);
  display: flex;
  align-items: center;
  gap: 6px;
  padding-left: 5px;
  color: #555;
}
.pill > svg { width: 38px; height: 38px; }
.pill div { display: grid; gap: 4px; font-size: 11px; }
.pill span { display: flex; align-items: center; gap: 5px; }
.pill span svg { width: 10px; height: 12px; }

/* download shelf */
.downloads {
  height: 44px;
  flex: none;
  background: #dedede;
  border-top: 1px solid #d0d0d0;
  display: flex;
  gap: 3.200px;
  padding: 2px 0 0 3px;
}
.dl {
  width: 205px;
  height: 38px;
  flex: none;
  display: flex;
  align-items: center;
  border: 1px solid #aaa;
  border-bottom-color: #8e8e8e;
  border-radius: 3px;
  background: linear-gradient(#ededed, #e1e1e1);
  padding-left: 8px;
  box-shadow: inset 0 1px #f8f8f8;
  color: #111;
}
.dl svg { width: 18px; height: 18px; margin-bottom: 3px; }
.dl span { flex: 1; margin-left: 11px; padding-top: 2px; font-size: 12px; letter-spacing: .06px; white-space: nowrap; }
.dl .spaced { letter-spacing: .16px; }
.dl b { width: 13px; height: 36px; border-left: 1px solid #b5b5b5; display: flex; justify-content: center; }
.dl b::before { content: ""; margin-top: 12px; height: 4px; border: 3px solid transparent; border-top: 4px solid #666; border-bottom: 0; }
.showall { display: flex; align-items: center; margin-left: 52px; height: 40px; gap: 8px; }
.showall > svg { width: 12px; height: 12px; }
.showall u { width: 105px; white-space: nowrap; }
.showall .close { width: 9px; height: 9px; margin-left: 11px; }

/* taskbar */
.taskbar {
  height: 40px;
  flex: none;
  display: flex;
  border-top: 1px solid #23303d;
  box-shadow: inset 0 1px #7ea3c0;
  background:
    linear-gradient(45deg, transparent 43%, rgba(190,215,235,.5) 49%, rgba(190,215,235,.5) 51%, transparent 57%) 1173px 0 / 120px 40px no-repeat,
    linear-gradient(90deg, #1a679c 0, #2c709c 110px, #1f5f94 1000px, #1c5d93 1200px, #1a4676 1400px, #173b66);
}
.orb { width: 38px; height: 38px; margin: 1px 0 0 8px; }
.desk { width: 31px; height: 24px; margin: 7px 13px 0 20px; }
.group {
  display: flex;
  height: 39px;
  width: 48px;
  margin-right: 3px;
  flex: none;
  border: 1px solid #123a56;
  border-radius: 3px;
  background: linear-gradient(150deg, rgba(255,255,255,.62), rgba(130,180,205,.38) 45%, rgba(110,165,195,.4));
  box-shadow: inset 0 0 0 1px rgba(200,225,240,.65);
}
.group > div { flex: 1; display: flex; align-items: center; justify-content: center; }
.group > div + div { border-left: 1px solid rgba(200,225,240,.5); }
.group svg { width: 30px; height: 30px; }
.group .up { width: 28px; height: 28px; margin: 0 2px 4px 0; }
.group .big { width: 32px; height: 33px; }
.group.many { width: 292px; }
.many svg { width: 26px; height: 34px; margin-right: 8px; }
.many > div { background: linear-gradient(150deg, rgba(255,255,255,.3), transparent 55%); }
.group.hot { background: radial-gradient(circle, #f5dede, #cf8f94); }
.group.duo { width: 96px; }
.group.cmd { width: 47px; }
.tray { display: flex; align-items: center; gap: 8px; margin-left: auto; width: 347px; flex: none; }
.tray svg { width: 16px; height: 16px; }
.tray .sogou { margin: -6px 10px 0 0; }
.tray .wf { width: 20px; height: 17px; margin-right: 3px; }
.clock { width: 82px; padding-left: 1px; text-align: center; color: #fff; line-height: 19px; font-size: 12px; letter-spacing: .1px; flex: none; padding-top: 1px; }
.peek { width: 14px; height: 39px; border: 1px solid #0c213c; background: linear-gradient(150deg, #7c9ab8, #26496f 60%); box-shadow: inset 1px 1px #8fa9c2; flex: none; }
```
